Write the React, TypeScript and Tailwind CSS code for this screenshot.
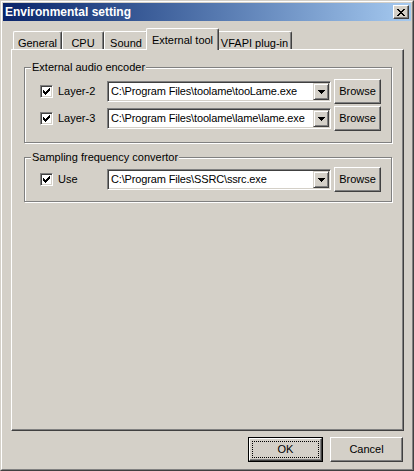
import React from "react";

const font = { fontFamily: '"Liberation Sans", Arial, sans-serif' };

function Check() {
  return (
    <div className="w-[13px] h-[13px] bg-white border border-t-[#808080] border-l-[#808080] border-r-white border-b-white shadow-[inset_1px_1px_0_#404040,inset_-1px_-1px_0_#d4d0c8] flex items-center justify-center">
      <svg width="7" height="7" viewBox="0 0 7 7" shapeRendering="crispEdges">
        <path d="M0 2h1v3h-1zM1 3h1v3h-1zM2 4h1v3h-1zM3 3h1v3h-1zM4 2h1v3h-1zM5 1h1v3h-1zM6 0h1v3h-1z" fill="#000" />
      </svg>
    </div>
  );
}

function Combo({ value }: { value: string }) {
  return (
    <div className="w-[224px] h-[21px] bg-white border border-t-[#808080] border-l-[#808080] border-r-white border-b-white shadow-[inset_1px_1px_0_#404040,inset_-1px_-1px_0_#d4d0c8] flex items-center p-[1px]">
      <div className="flex-1 pl-[2px] text-[11px] tracking-[-0.15px] text-black leading-none whitespace-nowrap overflow-hidden">{value}</div>
      <div className="w-[16px] h-[17px] bg-[#d4d0c8] border border-t-[#d4d0c8] border-l-[#d4d0c8] border-r-[#404040] border-b-[#404040] shadow-[inset_1px_1px_0_white,inset_-1px_-1px_0_#808080] flex items-center justify-center">
        <svg width="7" height="4" viewBox="0 0 7 4" shapeRendering="crispEdges">
          <path d="M0 0h7v1h-7zM1 1h5v1h-5zM2 2h3v1h-3zM3 3h1v1h-1z" fill="#000" />
        </svg>
      </div>
    </div>
  );
}

function Button({ label, w, h = "h-[25px]" }: { label: string; w: string; h?: string }) {
  return (
    <div className={`${w} ${h} bg-[#d4d0c8] border border-t-white border-l-white border-r-[#404040] border-b-[#404040] shadow-[inset_-1px_-1px_0_#808080] flex items-center justify-center text-[11px] text-black`}>
      {label}
    </div>
  );
}

function Row({ label, value }: { label: string; value: string }) {
  return (
    <div className="flex items-center h-[25px]">
      <div className="w-[67px] flex items-center">
        <Check />
        <span className="ml-[5px] text-[11px] text-black">{label}</span>
      </div>
      <Combo value={value} />
      <div className="ml-[3px]">
        <Button label="Browse" w="w-[47px]" />
      </div>
    </div>
  );
}

function Group({ title, children, className }: { title: string; children: React.ReactNode; className?: string }) {
  return (
    <div className={`relative border border-[#808080] shadow-[1px_1px_0_white,inset_1px_1px_0_white] ${className ?? ""}`}>
      <span className="absolute left-[6px] top-[-7px] bg-[#d4d0c8] px-[1px] text-[11px] leading-[13px] text-black">{title}</span>
      {children}
    </div>
  );
}

function Tab({ label, w, selected }: { label: string; w: string; selected?: boolean }) {
  if (selected) {
    return (
      <div className={`${w} h-[22px] -mb-[1px] -mx-[2px] relative z-10 bg-[#d4d0c8] border-t border-l border-t-white border-l-white border-r border-r-[#404040] shadow-[inset_-1px_0_0_#808080] rounded-tl-[2px] rounded-tr-[2px] flex justify-center pt-[3px] text-[11px] text-black`}>
        {label}
      </div>
    );
  }
  return (
    <div className={`${w} h-[18px] bg-[#d4d0c8] border-t border-l border-t-white border-l-white border-r border-r-[#404040] shadow-[inset_-1px_0_0_#808080] rounded-tl-[2px] rounded-tr-[2px] flex justify-center pt-[3px] text-[11px] text-black`}>
      {label}
    </div>
  );
}

export default function App() {
  return (
    <div style={font} className="w-[414px] h-[471px] bg-[#d4d0c8] border border-t-[#d4d0c8] border-l-[#d4d0c8] border-r-[#404040] border-b-[#404040]">
      <div className="w-full h-full border border-t-white border-l-white border-r-[#808080] border-b-[#808080] p-[1px] flex flex-col">
        <div className="h-[18px] bg-gradient-to-r from-[#0a246a] to-[#a6caf0] flex items-center justify-between pl-[2px] pr-[2px]">
          <span className="text-white font-bold text-[12px]">Environmental setting</span>
          <div className="w-[16px] h-[14px] bg-[#d4d0c8] border border-t-white border-l-white border-r-[#404040] border-b-[#404040] shadow-[inset_-1px_-1px_0_#808080] flex items-center justify-center">
            <svg width="8" height="7" viewBox="0 0 8 7" shapeRendering="crispEdges">
              <path d="M0 0h2v1h-2zM6 0h2v1h-2zM1 1h2v1h-2zM5 1h2v1h-2zM2 2h4v1h-4zM3 3h2v1h-2zM2 4h4v1h-4zM1 5h2v1h-2zM5 5h2v1h-2zM0 6h2v1h-2zM6 6h2v1h-2z" fill="#000" />
            </svg>
          </div>
        </div>
        <div className="flex-1 flex flex-col pl-[8px] pr-[7px]">
          <div className="mt-[7px] h-[21px] flex items-end pl-[2px]">
            <Tab label="General" w="w-[49px]" />
            <Tab label="CPU" w="w-[42px]" />
            <Tab label="Sound" w="w-[44px]" />
            <Tab label="External tool" w="w-[73px]" selected />
            <Tab label="VFAPI plug-in" w="w-[75px]" />
          </div>
          <div className="h-[382px] border border-t-white border-l-white border-r-[#404040] border-b-[#404040] shadow-[inset_-1px_-1px_0_#808080] pt-[17px] pl-[12px] pr-[11px]">
            <Group title="External audio encoder" className="h-[76px] pt-[11px] pl-[15px] flex flex-col gap-[2px]">
              <Row label="Layer-2" value="C:\Program Files\toolame\tooLame.exe" />
              <Row label="Layer-3" value="C:\Program Files\toolame\lame\lame.exe" />
            </Group>
            <Group title="Sampling frequency convertor" className="mt-[14px] h-[45px] pt-[9px] pl-[15px]">
              <Row label="Use" value="C:\Program Files\SSRC\ssrc.exe" />
            </Group>
          </div>
          <div className="flex justify-end mt-[6px] gap-[7px] pr-[1px]">
            <div className="w-[75px] h-[25px] border border-black">
              <div className="w-full h-full bg-[#d4d0c8] border border-t-white border-l-white border-r-[#404040] border-b-[#404040] shadow-[inset_-1px_-1px_0_#808080] p-[2px]">
                <div className="w-full h-full border border-dotted border-black flex items-center justify-center text-[11px] text-black">OK</div>
              </div>
            </div>
            <Button label="Cancel" w="w-[73px]" h="h-[25px]" />
          </div>
        </div>
      </div>
    </div>
  );
}
